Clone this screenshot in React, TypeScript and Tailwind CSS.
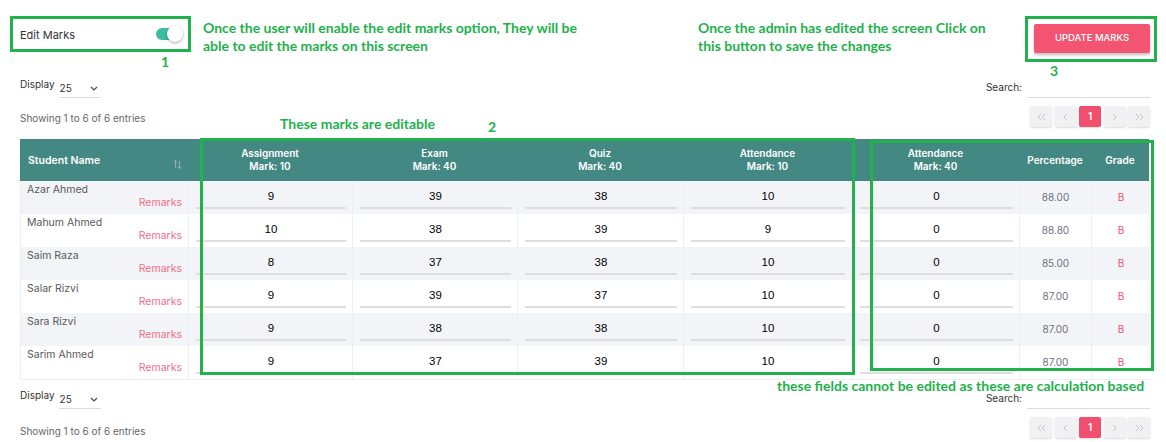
import React from "react";

const cols = "grid grid-cols-[168px_164px_165px_166px_169px_167px_72px_58px]";

const rows = [
  { name: "Azar Ahmed", a: "9", e: "39", q: "38", t: "10", t40: "0", pct: "88.00", g: "B" },
  { name: "Mahum Ahmed", a: "10", e: "38", q: "39", t: "9", t40: "0", pct: "88.80", g: "B" },
  { name: "Saim Raza", a: "8", e: "37", q: "38", t: "10", t40: "0", pct: "85.00", g: "B" },
  { name: "Salar Rizvi", a: "9", e: "39", q: "37", t: "10", t40: "0", pct: "87.00", g: "B" },
  { name: "Sara Rizvi", a: "9", e: "38", q: "38", t: "10", t40: "0", pct: "87.00", g: "B" },
  { name: "Sarim Ahmed", a: "9", e: "37", q: "39", t: "10", t40: "0", pct: "87.00", g: "B" },
];

function Note({ children, className = "" }: { children: React.ReactNode; className?: string }) {
  return (
    <div className={"font-['Lato',sans-serif] font-bold text-[14px] leading-[18px] text-[#22b14c] " + className}>
      {children}
    </div>
  );
}

function Chevron() {
  return (
    <svg width="8" height="5" viewBox="0 0 8 5" fill="none" stroke="#444" strokeWidth="1.1">
      <polyline points="1,1 4,4 7,1" />
    </svg>
  );
}

function Display() {
  return (
    <div className="flex items-start">
      <span className="mt-[2px] text-[10px] leading-[12px] text-[#333]">Display</span>
      <div className="ml-[4px] flex h-[22px] w-[42px] items-center justify-between border-b border-[#dcdcdc] pl-[1px] pr-[3px] pt-[3px]">
        <span className="text-[10px] text-[#333]">25</span>
        <Chevron />
      </div>
    </div>
  );
}

function Search({ top }: { top: string }) {
  return (
    <div className="flex items-start">
      <span className={top + " text-[10px] leading-[12px] text-[#333]"}>Search:</span>
      <div className="ml-[5px] h-[22px] w-[123px] border-b border-[#dcdcdc]" />
    </div>
  );
}

function PageBtn({ children, active = false }: { children: React.ReactNode; active?: boolean }) {
  return (
    <div
      className={
        "flex h-[21px] w-[22px] items-center justify-center rounded-[2px] shadow-[0_1px_2px_rgba(0,0,0,0.15)] " +
        (active ? "bg-[#f0506e] text-white" : "bg-[#f1f1f4] text-[#c4c4c8]")
      }
    >
      {children}
    </div>
  );
}

function Pager() {
  return (
    <div className="flex gap-[2.5px]">
      <PageBtn>
        <svg width="9" height="8" viewBox="0 0 9 8" fill="none" stroke="currentColor" strokeWidth="1">
          <polyline points="4,1 1,4 4,7" />
          <polyline points="8,1 5,4 8,7" />
        </svg>
      </PageBtn>
      <PageBtn>
        <svg width="5" height="8" viewBox="0 0 5 8" fill="none" stroke="currentColor" strokeWidth="1">
          <polyline points="4,1 1,4 4,7" />
        </svg>
      </PageBtn>
      <PageBtn active>
        <span className="text-[10px] font-semibold">1</span>
      </PageBtn>
      <PageBtn>
        <svg width="5" height="8" viewBox="0 0 5 8" fill="none" stroke="currentColor" strokeWidth="1">
          <polyline points="1,1 4,4 1,7" />
        </svg>
      </PageBtn>
      <PageBtn>
        <svg width="9" height="8" viewBox="0 0 9 8" fill="none" stroke="currentColor" strokeWidth="1">
          <polyline points="1,1 4,4 1,7" />
          <polyline points="5,1 8,4 5,7" />
        </svg>
      </PageBtn>
    </div>
  );
}

function MarkInput({ value, pr = "pr-[6px]" }: { value: string; pr?: string }) {
  return (
    <div className={"h-full border-r border-[#eceef2] pl-[7px] " + pr}>
      <input
        readOnly
        value={value}
        className="h-[28px] w-full border-b-2 border-[#dedede] bg-transparent pt-[4px] text-center font-['Liberation_Sans',Arial,sans-serif] text-[11.5px] text-black outline-none"
      />
    </div>
  );
}

export default function App() {
  return (
    <div className="relative h-[442px] w-[1166px] overflow-hidden bg-white font-['Inter',sans-serif]">
      {/* top bar */}
      <div className="flex h-[76px] items-start pt-[16px]">
        <div className="ml-[10px] w-[181px]">
          <div className="flex h-[36px] items-center justify-between border-[3px] border-[#22b14c] pl-[7px] pr-[5px]">
            <span className="pt-[3px] text-[11px] text-[#333]">Edit Marks</span>
            <div className="relative h-[16px] w-[27px]">
              <div className="absolute left-0 top-[2px] h-[12px] w-[22px] rounded-full bg-[#3dbd9d]" />
              <div className="absolute right-0 top-0 h-[16px] w-[16px] rounded-full bg-white shadow-[0_1px_3px_rgba(0,0,0,0.35)]" />
            </div>
          </div>
          <Note className="pl-[151px] pt-[1px]">1</Note>
        </div>
        <Note className="ml-[12px] mt-[3px] w-[495px]">
          Once the user will enable the edit marks option, They will be
          <br />
          able to edit the marks on this screen
        </Note>
        <Note className="mt-[3px] w-[327px]">
          Once the admin has edited the screen Click on
          <br />
          this button to save the changes
        </Note>
        <div className="w-[132px]">
          <div className="h-[46px] border-[3px] border-[#22b14c] pl-[6px] pt-[5px]">
            <div className="flex h-[29px] w-[116px] items-center justify-center rounded-[2px] bg-[#f25472] text-[9.5px] font-medium text-white shadow-[0_2px_3px_rgba(0,0,0,0.25)]">
              UPDATE MARKS
            </div>
          </div>
          <Note className="pl-[25px]">3</Note>
        </div>
      </div>

      {/* display / search */}
      <div className="flex h-[22px] items-start justify-between pl-[20px] pr-[16px]">
        <Display />
        <Search top="mt-[5px]" />
      </div>

      {/* showing / pager */}
      <div className="flex h-[41px] items-start pl-[20px] pr-[16px]">
        <span className="mt-[14px] w-[260px] text-[10px] leading-[12px] text-[#666]">Showing 1 to 6 of 6 entries</span>
        <Note className="mt-[17px]">These marks are editable</Note>
        <Note className="ml-[53px] mt-[20px]">2</Note>
        <div className="ml-auto mt-[8px]">
          <Pager />
        </div>
      </div>

      {/* table */}
      <div className="relative ml-[20px] w-[1129px]">
        <div className={cols + " h-[42px] bg-[#438882] text-[10px] font-semibold leading-[13px] text-white"}>
          <div className="flex items-center justify-between pl-[8px] pr-[6px]">
            <span className="text-[10.5px]">Student Name</span>
            <svg className="mt-[8px]" width="9" height="9" viewBox="0 0 9 9" fill="none" stroke="rgba(255,255,255,0.35)" strokeWidth="1">
              <polyline points="0.5,2.5 2.5,0.5 4.5,2.5" />
              <line x1="2.5" y1="0.5" x2="2.5" y2="8.5" />
              <polyline points="4.5,6.5 6.5,8.5 8.5,6.5" />
              <line x1="6.5" y1="0.5" x2="6.5" y2="8.5" />
            </svg>
          </div>
          {[
            ["Assignment", "Mark: 10"],
            ["Exam", "Mark: 40"],
            ["Quiz", "Mark: 40"],
            ["Attendance", "Mark: 10"],
            ["Attendance", "Mark: 40"],
          ].map(([a, b], i) => (
            <div key={i} className="flex flex-col items-center justify-center pb-[1px] text-center">
              <span>{a}</span>
              <span>{b}</span>
            </div>
          ))}
          <div className="flex items-center justify-center">Percentage</div>
          <div className="flex items-center justify-center">Grade</div>
        </div>
        <div className="border-b border-l border-[#eceef2]">
          {rows.map((r, i) => (
            <div key={r.name} className={cols + " h-[33px] " + (i % 2 === 0 ? "bg-[#f3f4f7]" : "bg-white")}>
              <div className="flex h-full flex-col border-r border-[#eceef2] pl-[6px] pr-[6px] pt-[2px] text-[10.5px] leading-[14px]">
                <span className="text-[#5a5a5a]">{r.name}</span>
                <span className="-mt-[1px] text-right text-[#ef6f8a]">Remarks</span>
              </div>
              <MarkInput value={r.a} />
              <MarkInput value={r.e} />
              <MarkInput value={r.q} />
              <MarkInput value={r.t} pr="pr-[7px]" />
              <MarkInput value={r.t40} />
              <div className="flex h-full items-center justify-center border-r border-[#eceef2] text-[10px] text-[#6b6f80]">
                {r.pct}
              </div>
              <div className="flex h-full items-center justify-center text-[10px] text-[#f0506e]">{r.g}</div>
            </div>
          ))}
        </div>

        {/* annotation frames */}
        <div className="absolute left-[180px] top-[-1px] h-[237px] w-[655px] border-[3px] border-[#22b14c]" />
        <div className="absolute left-[850px] top-[1px] h-[231px] w-[284px] border-[3px] border-[#22b14c]" />
      </div>

      <div className="h-[10px] pl-[777px]">
        <Note className="-mt-[3px] leading-[12px]">these fields cannot be edited as these are calculation based</Note>
      </div>

      {/* bottom display / search */}
      <div className="flex h-[22px] items-start justify-between pl-[20px] pr-[16px]">
        <Display />
        <Search top="mt-[5px]" />
      </div>

      <div className="flex items-start pl-[20px] pr-[16px]">
        <span className="mt-[16px] text-[10px] leading-[12px] text-[#666]">Showing 1 to 6 of 6 entries</span>
        <div className="ml-auto mt-[8px]">
          <Pager />
        </div>
      </div>
    </div>
  );
}
